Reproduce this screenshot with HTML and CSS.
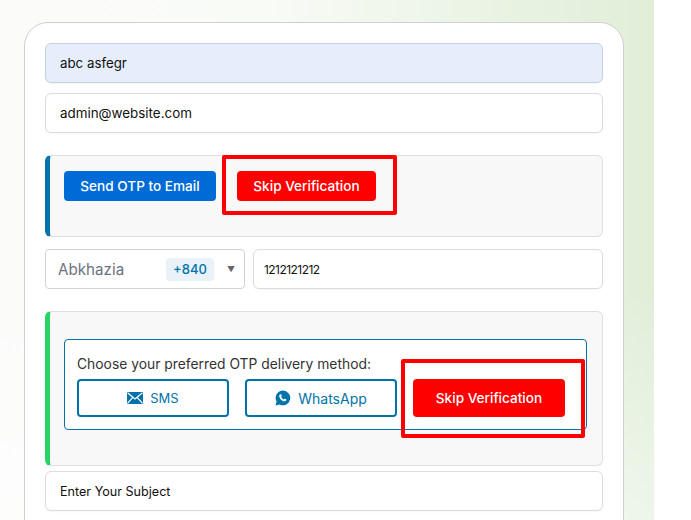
FILE: index.html
```html
<!DOCTYPE html>
<html lang="en">
<head>
<meta charset="utf-8">
<title>Verification form</title>
<link rel="stylesheet" href="styles.css">
</head>
<body>
<div class="page">
  <form class="card">
    <div class="field field-filled">abc asfegr</div>
    <div class="field field-email">admin@website.com</div>

    <section class="otp otp-email">
      <div class="actions">
        <button type="button" class="btn btn-blue">Send OTP to Email</button>
        <button type="button" class="btn btn-red btn-skip-top">Skip Verification</button>
      </div>
      <div class="mark mark-top"></div>
    </section>

    <div class="phone-row">
      <div class="select">
        <span class="country">Abkhazia</span>
        <span class="code">+840</span>
        <span class="caret">▼</span>
      </div>
      <div class="field field-phone">1212121212</div>
    </div>

    <section class="otp otp-phone">
      <div class="method">
        <p class="method-label">Choose your preferred OTP delivery method:</p>
        <div class="method-buttons">
          <button type="button" class="btn btn-outline btn-sms">
            <svg class="icon" width="16" height="12" viewBox="0 0 16 12"><path fill="#0073aa" d="M0 0h16v12H0z"/><path fill="none" stroke="#fff" stroke-width="1.2" d="M0.5 0.8 8 7l7.500-6.200M0.500 11.300l5.300-6M15.500 11.300l-5.300-6"/></svg>
            SMS
          </button>
          <button type="button" class="btn btn-outline">
            <svg class="icon" width="16" height="16" viewBox="0 0 16 16"><path fill="#0073aa" d="M8 .5a7.400 7.400 0 0 0-6.400 11.100L.5 15.500l4-1A7.400 7.400 0 1 0 8 .5z"/><path fill="#fff" d="M5.700 4.200c-.3 0-.6.1-.9.400-.5.500-.7 1.100-.6 1.800.2 1.100.8 2.100 1.600 3 1 1 2.200 1.700 3.500 1.900.7.100 1.400-.1 1.800-.7.300-.4.400-.8.300-1.200l-1.800-.9-.8.900c-1.200-.4-2.100-1.300-2.600-2.500l.7-.8-.8-1.800z"/></svg>
            WhatsApp
          </button>
          <button type="button" class="btn btn-red btn-skip-bottom">Skip Verification</button>
        </div>
      </div>
      <div class="mark mark-bottom"></div>
    </section>

    <div class="field field-subject">Enter Your Subject</div>
  </form>
</div>
</body>
</html>
```
FILE: styles.css
```css
* { box-sizing: border-box; }
html, body { margin: 0; height: 520px; overflow: hidden; background: #fff; }
.page {
  width: 654px;
  height: 520px;
  overflow: hidden;
  padding: 22px 0 0 24px;
  background:
    linear-gradient(180deg, rgba(255, 255, 255, 0) 55%, rgba(255, 255, 255, .45) 100%),
    linear-gradient(90deg, #fbfcfa 0%, #f9fbf7 40%, #e8f2e1 80%, #e0eed8 100%);
  font-family: "Inter", "Liberation Sans", sans-serif;
}
.card {
  width: 600px;
  height: 620px;
  padding: 20px 20px 0;
  background: #fff;
  border: 1px solid #cfcfcf;
  border-radius: 24px;
}
.field {
  display: flex;
  align-items: center;
  height: 40px;
  padding: 0 14px;
  background: #fff;
  border: 1px solid #dcdcdc;
  border-radius: 6px;
  font-size: 13px;
  color: #111;
  box-shadow: 0 1px 2px rgba(0, 0, 0, .04);
}
.field-filled { background: #e6eefb; border-color: #c7d0e0; font-size: 13.300px; }
.field-email { margin-top: 10px; font-size: 13.400px; }
.otp {
  position: relative;
  background: #f8f8f8;
  border: 1px solid #dfdfdf;
  border-radius: 6px;
}
.otp-email {
  margin-top: 22px;
  height: 82px;
  padding: 15px 14px;
  border-left: 5px solid #0073aa;
}
.actions { display: flex; gap: 21px; }
.btn {
  display: flex;
  align-items: center;
  justify-content: center;
  gap: 7px;
  border: 0;
  border-radius: 4px;
  font-family: inherit;
  font-size: 13.600px;
  font-weight: 500;
  cursor: pointer;
}
.btn-blue { width: 152px; height: 30px; background: #006bd6; color: #fff; }
.btn-red { background: #f00; color: #fff; }
.btn-skip-top { width: 139px; height: 30px; }
.btn-skip-bottom { width: 152px; height: 38px; }
.btn-outline {
  width: 152px;
  height: 38px;
  background: #fff;
  color: #0073aa;
  border: 2px solid #0073aa;
  font-size: 14px;
  font-weight: 400;
}
.btn-sms { font-size: 13px; }
.mark { position: absolute; border: 4px solid #f00; border-radius: 2px; pointer-events: none; }
.mark-top { left: 172px; top: -1px; width: 175px; height: 60px; }
.mark-bottom { left: 351px; top: 47px; width: 184px; height: 79px; }
.phone-row { display: flex; gap: 8px; margin-top: 12px; }
.select {
  display: flex;
  align-items: center;
  width: 200px;
  height: 40px;
  padding: 0 9px 0 12px;
  background: #fff;
  border: 1px solid #cfd2d8;
  border-radius: 4px;
}
.country { flex: 1; font-size: 15.200px; color: #6b7280; }
.code {
  display: flex;
  align-items: center;
  height: 23px;
  padding: 0 7px;
  margin-right: 13px;
  background: #e8f2f8;
  border-radius: 4px;
  font-size: 13px;
  font-weight: 500;
  color: #0073aa;
}
.caret { font-size: 8px; color: #666; }
.field-phone { flex: 1; padding: 0 10px; font-size: 12px; letter-spacing: -.55px; }
.otp-phone {
  margin-top: 22px;
  height: 155px;
  padding: 27px 15px 0 14px;
  border-left: 5px solid #27d367;
}
.method {
  height: 91px;
  padding: 15px 12px 0;
  background: #fff;
  border: 1px solid #0073aa;
  border-radius: 4px;
}
.method-label { margin: 0 0 6px; font-size: 13.850px; line-height: 18px; color: #333; }
.method-buttons { display: flex; gap: 16px; }
.field-subject { margin-top: 5px; font-size: 12.600px; }
```
